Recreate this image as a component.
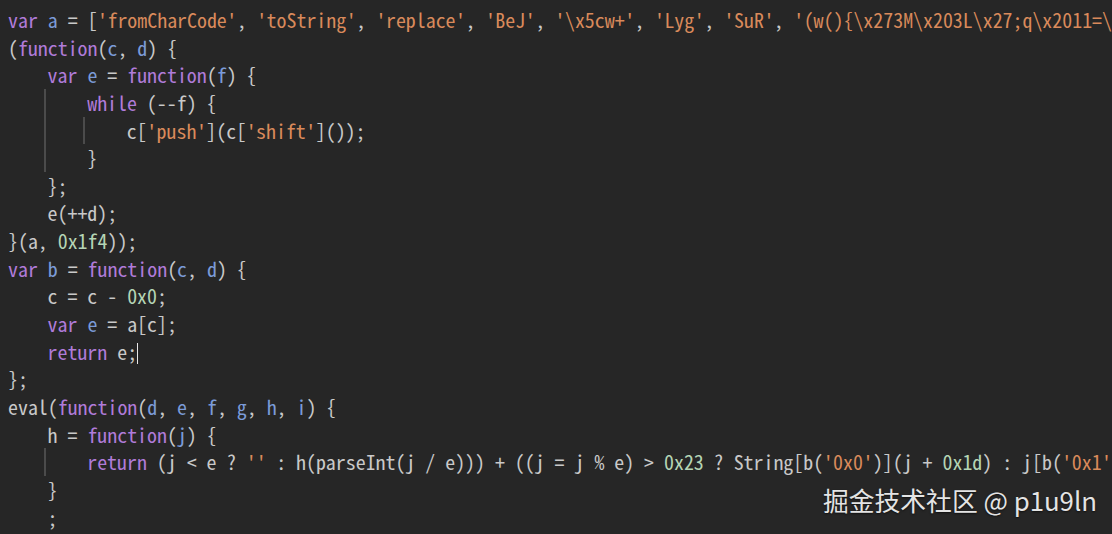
import React from 'react'

type Tok = [string, string]

// colour per token kind
const tone: Record<string, string> = {
  k: 'text-[#b07bd9]',
  v: 'text-[#7b9bd8]',
  s: 'text-[#d98a5b]',
  n: 'text-[#b5d5b5]',
  p: 'text-[#c9c9c9]',
}

const lines: { indent: number; toks: Tok[]; cursor?: boolean }[] = [
  {
    indent: 0,
    toks: [
      ['k', 'var'], ['p', ' '], ['v', 'a'], ['p', ' = ['],
      ['s', "'fromCharCode'"], ['p', ', '], ['s', "'toString'"], ['p', ', '],
      ['s', "'replace'"], ['p', ', '], ['s', "'BeJ'"], ['p', ', '],
      ['s', "'\\x5cw+'"], ['p', ', '], ['s', "'Lyg'"], ['p', ', '],
      ['s', "'SuR'"], ['p', ', '], ['s', "'(w(){\\x273M\\x203L\\x27;q\\x2011=\\x5c\\x27'"],
    ],
  },
  { indent: 0, toks: [['p', '('], ['k', 'function'], ['p', '('], ['v', 'c'], ['p', ', '], ['v', 'd'], ['p', ') {']] },
  { indent: 1, toks: [['k', 'var'], ['p', ' '], ['v', 'e'], ['p', ' = '], ['k', 'function'], ['p', '('], ['v', 'f'], ['p', ') {']] },
  { indent: 2, toks: [['k', 'while'], ['p', ' (--f) {']] },
  { indent: 3, toks: [['p', 'c['], ['s', "'push'"], ['p', '](c['], ['s', "'shift'"], ['p', ']());']] },
  { indent: 2, toks: [['p', '}']] },
  { indent: 1, toks: [['p', '};']] },
  { indent: 1, toks: [['p', 'e(++d);']] },
  { indent: 0, toks: [['p', '}(a, '], ['n', '0x1f4'], ['p', '));']] },
  { indent: 0, toks: [['k', 'var'], ['p', ' '], ['v', 'b'], ['p', ' = '], ['k', 'function'], ['p', '('], ['v', 'c'], ['p', ', '], ['v', 'd'], ['p', ') {']] },
  { indent: 1, toks: [['p', 'c = c - '], ['n', '0x0'], ['p', ';']] },
  { indent: 1, toks: [['k', 'var'], ['p', ' '], ['v', 'e'], ['p', ' = a[c];']] },
  { indent: 1, toks: [['k', 'return'], ['p', ' e;']], cursor: true },
  { indent: 0, toks: [['p', '};']] },
  {
    indent: 0,
    toks: [
      ['p', 'eval('], ['k', 'function'], ['p', '('], ['v', 'd'], ['p', ', '], ['v', 'e'], ['p', ', '],
      ['v', 'f'], ['p', ', '], ['v', 'g'], ['p', ', '], ['v', 'h'], ['p', ', '], ['v', 'i'], ['p', ') {'],
    ],
  },
  { indent: 1, toks: [['p', 'h = '], ['k', 'function'], ['p', '('], ['v', 'j'], ['p', ') {']] },
  {
    indent: 2,
    toks: [
      ['k', 'return'], ['p', ' (j < e ? '], ['s', "''"], ['p', ' : h(parseInt(j / e))) + ((j = j % e) > '],
      ['n', '0x23'], ['p', ' ? String[b('], ['s', "'0x0'"], ['p', ')](j + '], ['n', '0x1d'],
      ['p', ') : j[b('], ['s', "'0x1'"], ['p', ')](j['], ['s', "'toString'"], ['p', ']('], ['n', '0x24'], ['p', ')));'],
    ],
  },
  { indent: 1, toks: [['p', '}']] },
  { indent: 1, toks: [['p', ';']] },
]

function Indent() {
  return (
    <span className="relative inline-block w-[39.6px] h-[27.65px] align-top">
      <span className="absolute left-[-4px] top-0 bottom-0 w-[2px] bg-[#4b4b4b]" />
    </span>
  )
}

export default function App() {
  return (
    <div className="relative w-[1112px] h-[534px] overflow-hidden bg-[#262626]">
      <div
        className="pt-[6px] pl-[8px] text-[19.9px] leading-[27.65px]"
        style={{ fontFamily: '"Noto Sans Mono CJK SC", "Liberation Mono", monospace' }}
      >
        {lines.map((ln, i) => (
          <div key={i} className="h-[27.65px] whitespace-pre overflow-hidden">
            {Array.from({ length: ln.indent }).map((_, j) => (
              <Indent key={j} />
            ))}
            {ln.toks.map(([t, s], j) => (
              <span key={j} className={tone[t]}>
                {s}
              </span>
            ))}
            {ln.cursor && <span className="inline-block w-px h-[21px] bg-[#e8e8e8] align-[-4px]" />}
          </div>
        ))}
      </div>

      {/* watermark */}
      <div
        className="absolute right-[15px] bottom-[21px] text-[25.8px] leading-none text-[#e4e4e4] [text-shadow:0_1px_2px_rgba(0,0,0,0.6)]"
        style={{ fontFamily: '"Noto Sans CJK SC", "Noto Sans", sans-serif' }}
      >
        掘金技术社区 @ p1u9ln
      </div>
    </div>
  )
}
